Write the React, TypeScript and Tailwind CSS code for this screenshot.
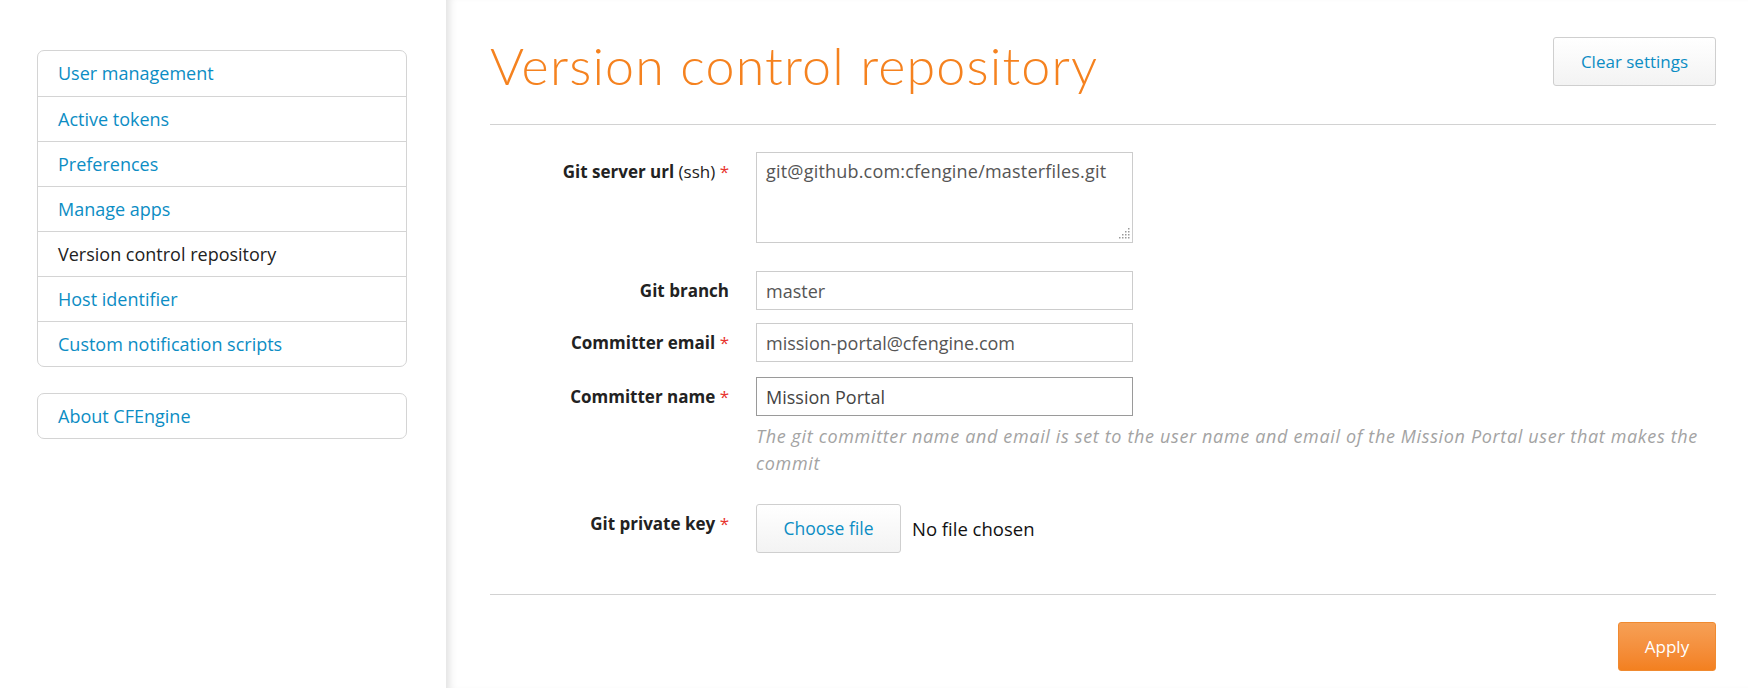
import { useState } from "react";

const navItems = [
  { label: "User management", active: false },
  { label: "Active tokens", active: false },
  { label: "Preferences", active: false },
  { label: "Manage apps", active: false },
  { label: "Version control repository", active: true },
  { label: "Host identifier", active: false },
  { label: "Custom notification scripts", active: false },
];

const Req = () => <span className="text-[#e8332e] font-normal"> *</span>;

const FormRow = ({ label, children, className = "" }: { label: React.ReactNode; children: React.ReactNode; className?: string }) => (
  <div className={`flex ${className}`}>
    <label className="w-[243px] shrink-0 pr-[4px] text-right font-bold text-[17px] text-[#222] leading-[39px]">
      {label}
    </label>
    <div className="ml-[23px] flex-1">{children}</div>
  </div>
);

// dotted resize grip like the one in the screenshot
const Grip = () => (
  <svg className="absolute right-[3px] bottom-[3px]" width="13" height="13" viewBox="0 0 13 13">
    {[
      [11, 1],
      [8, 4], [11, 4],
      [5, 7], [8, 7], [11, 7],
      [2, 10], [5, 10], [8, 10], [11, 10],
    ].map(([x, y]) => (
      <rect key={`${x}-${y}`} x={x} y={y} width="1.5" height="1.5" fill="#9a9a9a" />
    ))}
  </svg>
);

export default function App() {
  const [url, setUrl] = useState("git@github.com:cfengine/masterfiles.git");
  const [branch, setBranch] = useState("master");
  const [email, setEmail] = useState("mission-portal@cfengine.com");
  const [name, setName] = useState("Mission Portal");

  return (
    <div className="flex w-[1748px] h-[688px] bg-white font-['Open_Sans',sans-serif] overflow-hidden">
      {/* sidebar */}
      <aside className="w-[446px] shrink-0 pl-[37px] pr-[39px] pt-[50px] flex flex-col gap-[26px]">
        <ul className="border border-[#d4d4d4] rounded-[7px]">
          {navItems.map((item, i) => (
            <li
              key={item.label}
              className={`h-[45px] flex items-center pl-[20px] text-[18px] ${i > 0 ? "border-t border-[#d4d4d4]" : ""} ${
                item.active ? "text-[#222]" : "text-[#0c8dc4]"
              }`}
            >
              {item.label}
            </li>
          ))}
        </ul>
        <ul className="border border-[#d4d4d4] rounded-[7px]">
          <li className="h-[44px] flex items-center pl-[20px] text-[18px] text-[#0c8dc4]">About CFEngine</li>
        </ul>
      </aside>

      {/* main */}
      <main className="flex-1 pl-[44px] pr-[32px] shadow-[inset_9px_0_8px_-6px_rgba(0,0,0,0.13)]">
        <div className="flex items-start justify-between h-[125px] border-b border-[#d2d2d2]">
          <h1 className="mt-[30px] font-['Lato',sans-serif] text-[52px] tracking-[1.15px] font-light text-[#f5821f] leading-[70px]">
            Version control repository
          </h1>
          <button className="mt-[37px] w-[163px] h-[49px] rounded-[3px] border border-[#cfcfcf] bg-gradient-to-b from-white to-[#f3f3f3] text-[17px] text-[#0c8dc4]">
            Clear settings
          </button>
        </div>

        <form className="pt-[27px] pb-[41px] border-b border-[#d2d2d2]">
          <FormRow
            label={
              <>
                Git server url <span className="font-normal">(ssh)</span>
                <Req />
              </>
            }
          >
            <div className="relative w-[377px]">
              <textarea
                value={url}
                onChange={(e) => setUrl(e.target.value)}
                className="block w-[377px] h-[91px] border border-[#ccc] px-[9px] py-[5px] text-[18px] tracking-[0.2px] text-[#555] outline-none resize-none"
              />
              <Grip />
            </div>
          </FormRow>

          <FormRow label="Git branch" className="mt-[28px]">
            <input
              value={branch}
              onChange={(e) => setBranch(e.target.value)}
              className="block w-[377px] h-[39px] border border-[#ccc] px-[9px] text-[18px] text-[#555] outline-none"
            />
          </FormRow>

          <FormRow
            label={
              <>
                Committer email
                <Req />
              </>
            }
            className="mt-[13px]"
          >
            <input
              value={email}
              onChange={(e) => setEmail(e.target.value)}
              className="block w-[377px] h-[39px] border border-[#ccc] px-[9px] text-[18px] text-[#555] outline-none"
            />
          </FormRow>

          <FormRow
            label={
              <>
                Committer name
                <Req />
              </>
            }
            className="mt-[15px]"
          >
            <input
              value={name}
              onChange={(e) => setName(e.target.value)}
              className="block w-[377px] h-[39px] border border-[#9a9a9a] px-[9px] text-[18px] text-[#444] outline-none"
            />
            <p className="mt-[7px] text-[18px] tracking-[0.65px] italic text-[#a3a3a3] leading-[27px]">
              The git committer name and email is set to the user name and email of the Mission Portal user that makes the commit
            </p>
          </FormRow>

          <FormRow
            label={
              <>
                Git private key
                <Req />
              </>
            }
            className="mt-[27px]"
          >
            <div className="flex items-center">
              <button
                type="button"
                className="w-[145px] h-[49px] rounded-[3px] border border-[#cfcfcf] bg-gradient-to-b from-white to-[#f3f3f3] text-[17.5px] text-[#0c8dc4]"
              >
                Choose file
              </button>
              <span className="ml-[11px] text-[18.5px] text-[#111]">No file chosen</span>
            </div>
          </FormRow>
        </form>

        <div className="flex justify-end pt-[27px]">
          <button className="w-[98px] h-[49px] rounded-[3px] border border-[#f08a30] bg-gradient-to-b from-[#f6a055] to-[#f3801f] text-[17px] text-white">
            Apply
          </button>
        </div>
      </main>
    </div>
  );
}
